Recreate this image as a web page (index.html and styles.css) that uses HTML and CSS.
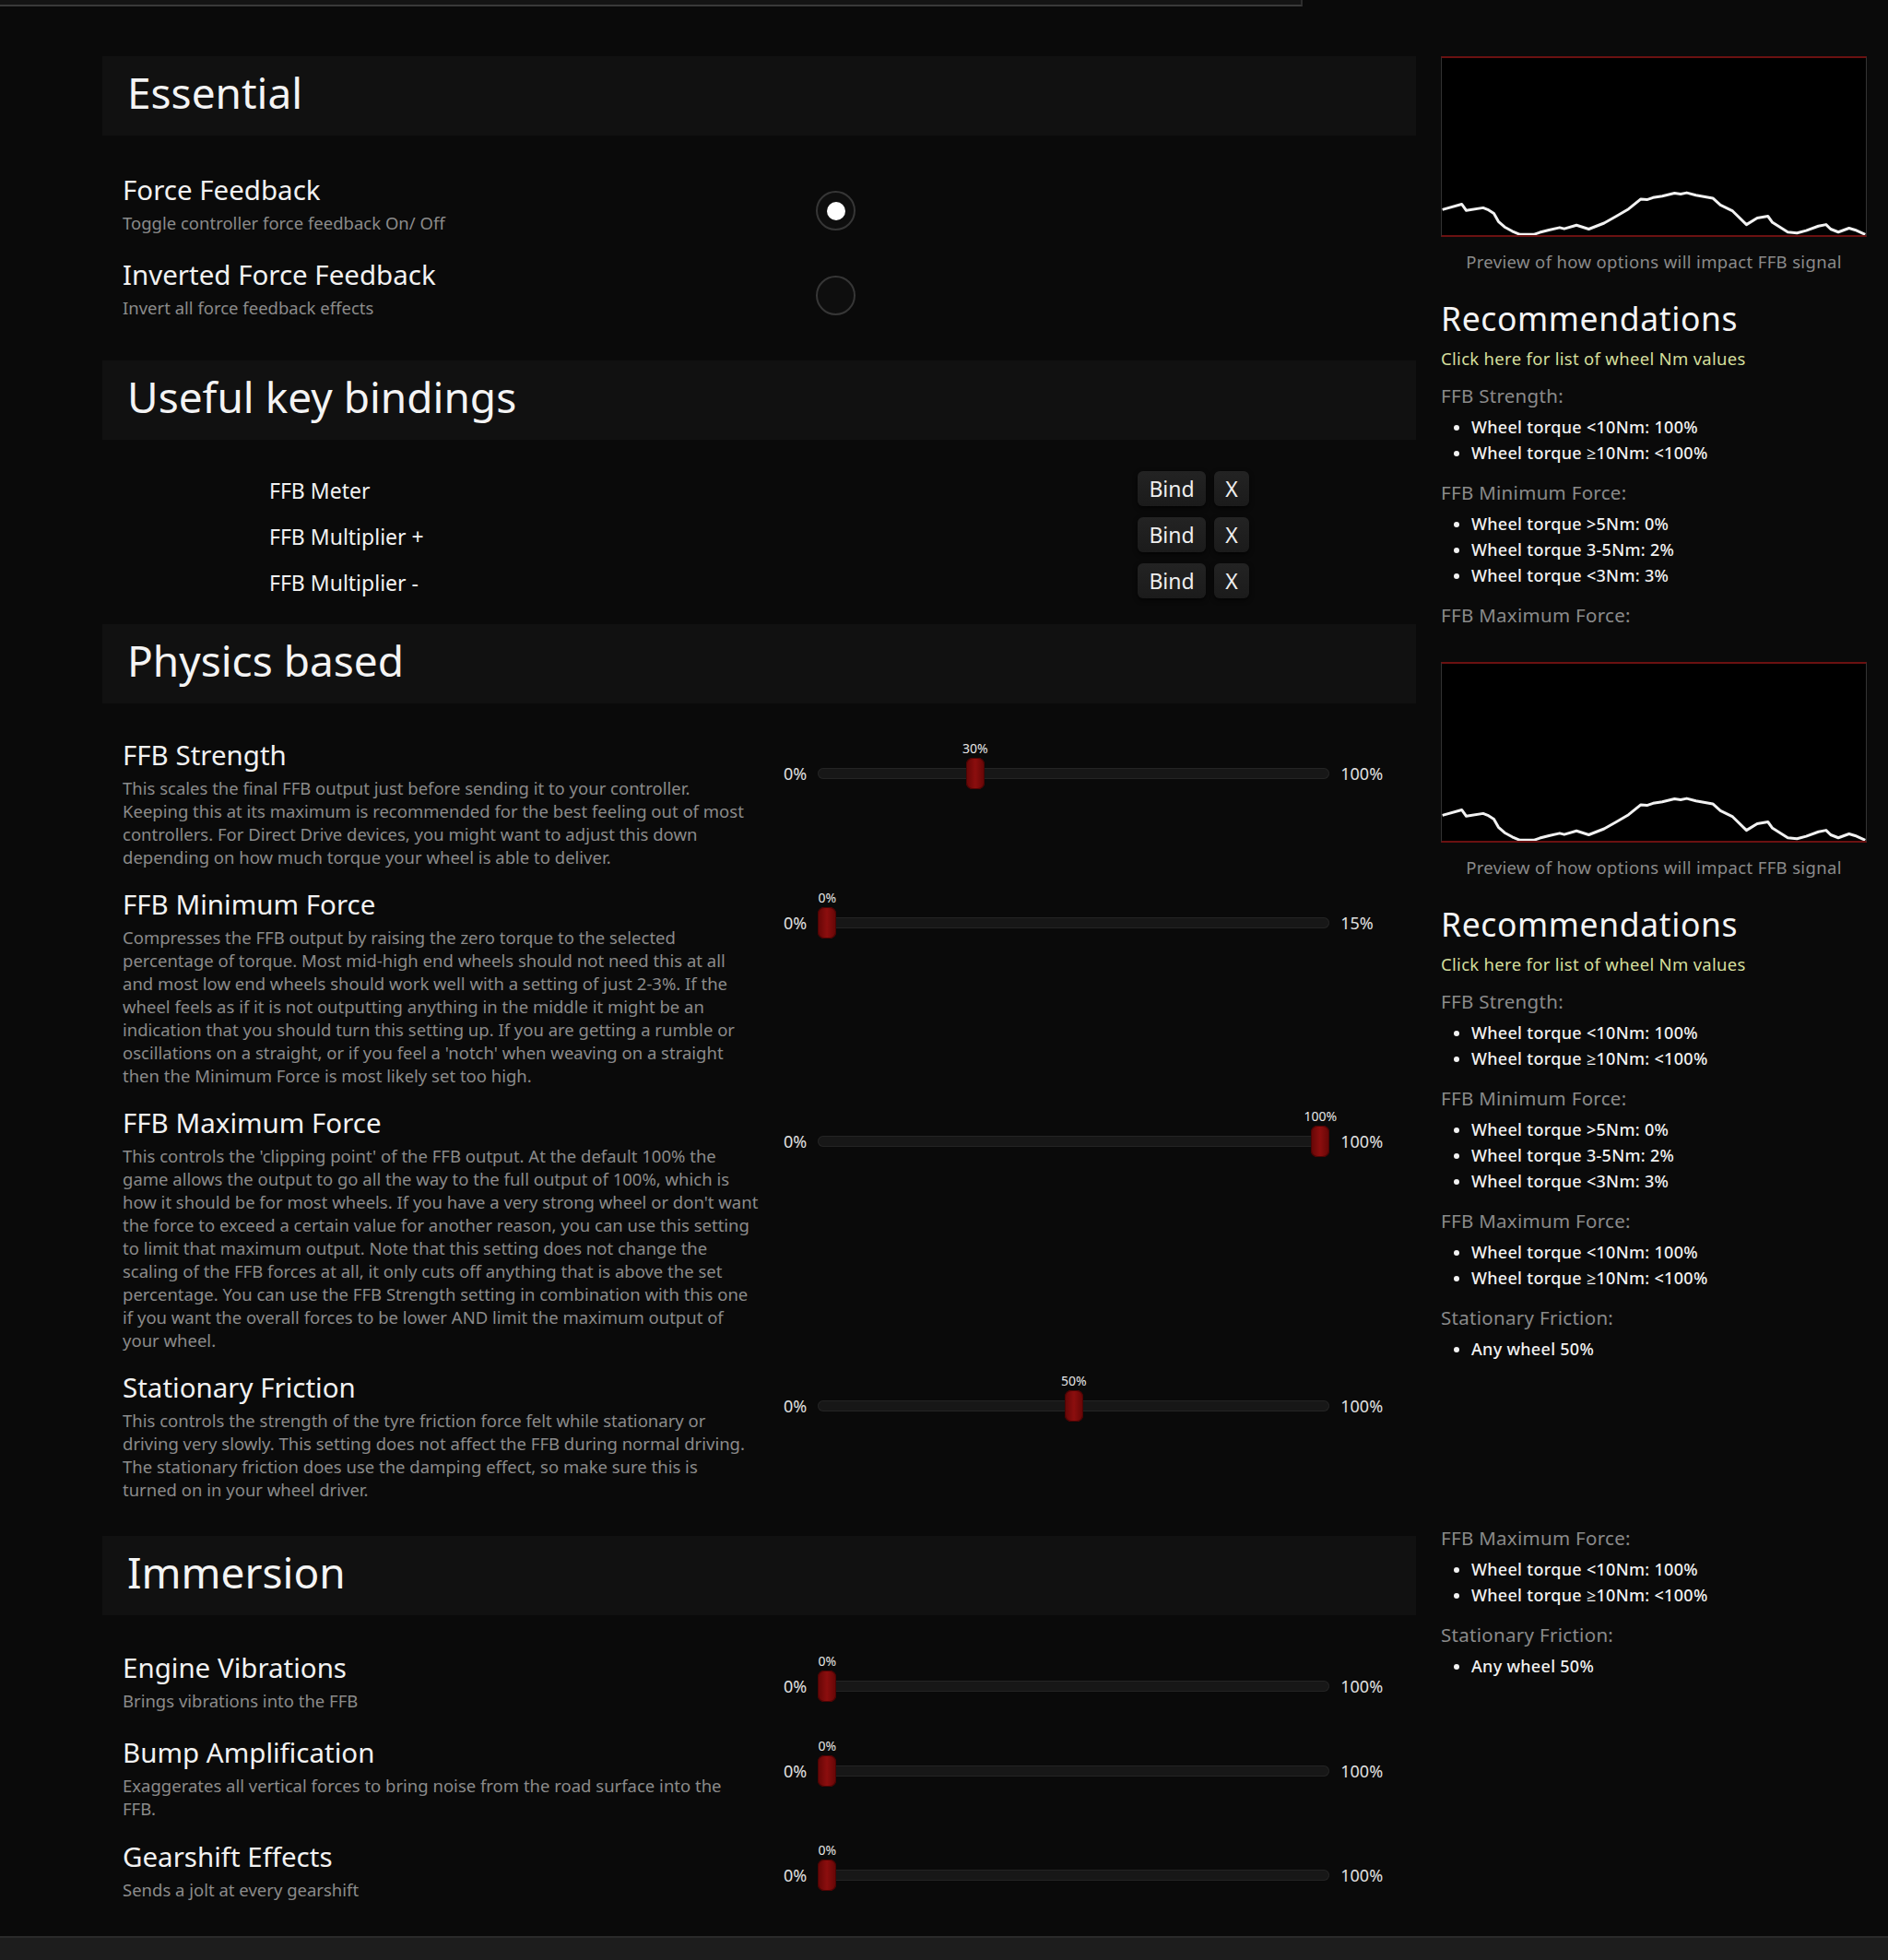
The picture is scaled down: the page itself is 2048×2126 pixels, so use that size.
FILE: index.html
```html
<!DOCTYPE html>
<html lang="en">
<head>
<meta charset="utf-8">
<title>FFB Settings</title>
<link rel="stylesheet" href="styles.css">
</head>
<body>
<div class="topbar"></div>
<div class="page">
  <main class="main">
    <section class="group">
      <h2 class="group-head">Essential</h2>
      <div class="group-body essential">
        <div class="setting">
          <div class="info">
            <div class="title">Force Feedback</div>
            <div class="desc">Toggle controller force feedback On/ Off</div>
          </div>
          <div class="control"><span class="radio"><span class="dot"></span></span></div>
        </div>
        <div class="setting">
          <div class="info">
            <div class="title">Inverted Force Feedback</div>
            <div class="desc">Invert all force feedback effects</div>
          </div>
          <div class="control"><span class="radio"></span></div>
        </div>
      </div>
    </section>

    <section class="group">
      <h2 class="group-head">Useful key bindings</h2>
      <div class="binds">
        <div class="bind-row"><span class="bind-label">FFB Meter</span><span class="btn btn-bind">Bind</span><span class="btn btn-x">X</span></div>
        <div class="bind-row"><span class="bind-label">FFB Multiplier +</span><span class="btn btn-bind">Bind</span><span class="btn btn-x">X</span></div>
        <div class="bind-row"><span class="bind-label">FFB Multiplier -</span><span class="btn btn-bind">Bind</span><span class="btn btn-x">X</span></div>
      </div>
    </section>

    <section class="group">
      <h2 class="group-head">Physics based</h2>
      <div class="group-body">
        <div class="setting">
          <div class="info">
            <div class="title">FFB Strength</div>
            <div class="desc">This scales the final FFB output just before sending it to your controller.<br>Keeping this at its maximum is recommended for the best feeling out of most<br>controllers. For Direct Drive devices, you might want to adjust this down<br>depending on how much torque your wheel is able to deliver.</div>
          </div>
          <div class="control">
            <div class="slider"><span class="lim">0%</span><div class="track"><div class="thumb" style="--p:0.30"><span class="thumb-val">30%</span></div></div><span class="lim">100%</span></div>
          </div>
        </div>
        <div class="setting">
          <div class="info">
            <div class="title">FFB Minimum Force</div>
            <div class="desc">Compresses the FFB output by raising the zero torque to the selected<br>percentage of torque. Most mid-high end wheels should not need this at all<br>and most low end wheels should work well with a setting of just 2-3%. If the<br>wheel feels as if it is not outputting anything in the middle it might be an<br>indication that you should turn this setting up. If you are getting a rumble or<br>oscillations on a straight, or if you feel a 'notch' when weaving on a straight<br>then the Minimum Force is most likely set too high.</div>
          </div>
          <div class="control">
            <div class="slider"><span class="lim">0%</span><div class="track"><div class="thumb" style="--p:0"><span class="thumb-val">0%</span></div></div><span class="lim">15%</span></div>
          </div>
        </div>
        <div class="setting">
          <div class="info">
            <div class="title">FFB Maximum Force</div>
            <div class="desc">This controls the 'clipping point' of the FFB output. At the default 100% the<br>game allows the output to go all the way to the full output of 100%, which is<br>how it should be for most wheels. If you have a very strong wheel or don't want<br>the force to exceed a certain value for another reason, you can use this setting<br>to limit that maximum output. Note that this setting does not change the<br>scaling of the FFB forces at all, it only cuts off anything that is above the set<br>percentage. You can use the FFB Strength setting in combination with this one<br>if you want the overall forces to be lower AND limit the maximum output of<br>your wheel.</div>
          </div>
          <div class="control">
            <div class="slider"><span class="lim">0%</span><div class="track"><div class="thumb" style="--p:1"><span class="thumb-val">100%</span></div></div><span class="lim">100%</span></div>
          </div>
        </div>
        <div class="setting">
          <div class="info">
            <div class="title">Stationary Friction</div>
            <div class="desc">This controls the strength of the tyre friction force felt while stationary or<br>driving very slowly. This setting does not affect the FFB during normal driving.<br>The stationary friction does use the damping effect, so make sure this is<br>turned on in your wheel driver.</div>
          </div>
          <div class="control">
            <div class="slider"><span class="lim">0%</span><div class="track"><div class="thumb" style="--p:0.5"><span class="thumb-val">50%</span></div></div><span class="lim">100%</span></div>
          </div>
        </div>
      </div>
    </section>

    <section class="group">
      <h2 class="group-head">Immersion</h2>
      <div class="group-body immersion">
        <div class="setting">
          <div class="info">
            <div class="title">Engine Vibrations</div>
            <div class="desc">Brings vibrations into the FFB</div>
          </div>
          <div class="control">
            <div class="slider"><span class="lim">0%</span><div class="track"><div class="thumb" style="--p:0"><span class="thumb-val">0%</span></div></div><span class="lim">100%</span></div>
          </div>
        </div>
        <div class="setting">
          <div class="info">
            <div class="title">Bump Amplification</div>
            <div class="desc">Exaggerates all vertical forces to bring noise from the road surface into the<br>FFB.</div>
          </div>
          <div class="control">
            <div class="slider"><span class="lim">0%</span><div class="track"><div class="thumb" style="--p:0"><span class="thumb-val">0%</span></div></div><span class="lim">100%</span></div>
          </div>
        </div>
        <div class="setting">
          <div class="info">
            <div class="title">Gearshift Effects</div>
            <div class="desc">Sends a jolt at every gearshift</div>
          </div>
          <div class="control">
            <div class="slider"><span class="lim">0%</span><div class="track"><div class="thumb" style="--p:0"><span class="thumb-val">0%</span></div></div><span class="lim">100%</span></div>
          </div>
        </div>
      </div>
    </section>
  </main>

  <aside class="side">
    <div class="panel">
      <div class="scope">
        <svg viewBox="0 0 1385 590" preserveAspectRatio="none"><polyline class="signal" points="2,505 65,487 80,508 135,499 150,505 170,518 185,545 205,563 230,577 255,588 300,588 320,581 350,573 385,565 400,569 440,557 480,570 530,550 570,527 610,503 650,470 670,472 690,465 720,460 760,450 780,453 800,449 830,457 885,467 910,490 950,510 995,555 1030,533 1065,527 1080,548 1130,580 1160,583 1190,575 1230,560 1255,555 1270,570 1295,580 1330,567 1350,573 1383,588"/></svg>
      </div>
      <p class="caption">Preview of how options will impact FFB signal</p>
      <h3 class="rec-title">Recommendations</h3>
      <p class="rec-link">Click here for list of wheel Nm values</p>
      <p class="rec-head">FFB Strength:</p>
      <ul class="rec-list"><li>Wheel torque &lt;10Nm: 100%</li><li>Wheel torque ≥10Nm: &lt;100%</li></ul>
      <p class="rec-head">FFB Minimum Force:</p>
      <ul class="rec-list"><li>Wheel torque &gt;5Nm: 0%</li><li>Wheel torque 3-5Nm: 2%</li><li>Wheel torque &lt;3Nm: 3%</li></ul>
      <p class="rec-head">FFB Maximum Force:</p>
    </div>

    <div class="panel panel-b">
      <div class="scope">
        <svg viewBox="0 0 1385 590" preserveAspectRatio="none"><polyline class="signal" points="2,505 65,487 80,508 135,499 150,505 170,518 185,545 205,563 230,577 255,588 300,588 320,581 350,573 385,565 400,569 440,557 480,570 530,550 570,527 610,503 650,470 670,472 690,465 720,460 760,450 780,453 800,449 830,457 885,467 910,490 950,510 995,555 1030,533 1065,527 1080,548 1130,580 1160,583 1190,575 1230,560 1255,555 1270,570 1295,580 1330,567 1350,573 1383,588"/></svg>
      </div>
      <p class="caption">Preview of how options will impact FFB signal</p>
      <h3 class="rec-title">Recommendations</h3>
      <p class="rec-link">Click here for list of wheel Nm values</p>
      <p class="rec-head">FFB Strength:</p>
      <ul class="rec-list"><li>Wheel torque &lt;10Nm: 100%</li><li>Wheel torque ≥10Nm: &lt;100%</li></ul>
      <p class="rec-head">FFB Minimum Force:</p>
      <ul class="rec-list"><li>Wheel torque &gt;5Nm: 0%</li><li>Wheel torque 3-5Nm: 2%</li><li>Wheel torque &lt;3Nm: 3%</li></ul>
      <p class="rec-head">FFB Maximum Force:</p>
      <ul class="rec-list"><li>Wheel torque &lt;10Nm: 100%</li><li>Wheel torque ≥10Nm: &lt;100%</li></ul>
      <p class="rec-head">Stationary Friction:</p>
      <ul class="rec-list"><li>Any wheel 50%</li></ul>
    </div>

    <div class="panel panel-c">
      <p class="rec-head">FFB Maximum Force:</p>
      <ul class="rec-list"><li>Wheel torque &lt;10Nm: 100%</li><li>Wheel torque ≥10Nm: &lt;100%</li></ul>
      <p class="rec-head">Stationary Friction:</p>
      <ul class="rec-list"><li>Any wheel 50%</li></ul>
    </div>
  </aside>
</div>
<footer class="bottombar"></footer>
</body>
</html>
```

FILE: styles.css
```css
* {
  box-sizing: border-box;
  margin: 0;
  padding: 0;
}

html,
body {
  background: #0a0a0a;
}

body {
  min-height: 100vh;
  display: flex;
  flex-direction: column;
  font-family: "Noto Sans", "Open Sans", sans-serif;
  color: #f1f1f1;
}

.topbar {
  width: 1413px;
  height: 7px;
  background: #141414;
  border-bottom: 2px solid #393939;
  border-right: 2px solid #2c2c2c;
}

.page {
  flex: 1;
  display: flex;
  gap: 27px;
  padding: 54px 0 0 111px;
}

.main {
  width: 1425px;
}

.group-head {
  height: 86px;
  line-height: 78px;
  padding-left: 27px;
  background: #111111;
  font-size: 46px;
  font-weight: 400;
  color: #f4f4f4;
}

.group-body {
  display: flex;
  flex-direction: column;
  gap: 19px;
  padding: 36px 0 38px 22px;
}

.group-body.essential {
  gap: 20px;
  padding: 39px 0 41px 22px;
}

.group-body.immersion {
  gap: 20px;
  padding: 37px 0 0 22px;
}

.setting {
  display: flex;
  min-height: 72px;
}

.info {
  width: 717px;
  flex: none;
}

.title {
  font-size: 29.5px;
  line-height: 40px;
  color: #f2f2f2;
}

.desc {
  margin-top: 3px;
  font-size: 18.5px;
  line-height: 25px;
  color: #8b8b8b;
  white-space: nowrap;
}

.control {
  flex: 1;
}

.radio {
  width: 43px;
  height: 43px;
  margin: 21px 0 0 35px;
  display: flex;
  align-items: center;
  justify-content: center;
  border-radius: 50%;
  border: 2px solid #363636;
  background: #0e0e0e;
}

.dot {
  width: 20px;
  height: 20px;
  border-radius: 50%;
  background: #ffffff;
}

/* key bindings */
.binds {
  display: flex;
  flex-direction: column;
  gap: 12px;
  padding: 34px 0 28px 181px;
}

.bind-row {
  display: flex;
  align-items: flex-start;
  height: 38px;
}

.bind-label {
  width: 942px;
  padding-top: 2px;
  font-size: 23px;
  line-height: 38px;
  color: #f2f2f2;
}

.btn {
  height: 38px;
  display: flex;
  align-items: center;
  justify-content: center;
  border-radius: 6px;
  background: linear-gradient(#232323, #1b1b1b);
  box-shadow: 0 2px 5px rgba(0, 0, 0, 0.7);
  font-size: 23px;
  color: #eeeeee;
}

.btn-bind {
  width: 74px;
}

.btn-x {
  width: 38px;
  margin-left: 9px;
}

/* sliders */
.slider {
  display: flex;
  align-items: center;
  gap: 12px;
  height: 34px;
  margin-top: 23px;
  font-size: 18px;
  color: #e0e0e0;
}

.track {
  position: relative;
  width: 555px;
  height: 12px;
  border-radius: 6px;
  background: #171717;
  box-shadow: inset 0 0 0 1px #242424;
}

.thumb {
  position: absolute;
  top: 50%;
  left: calc(var(--p) * (100% - 20px));
  width: 20px;
  height: 34px;
  margin-top: -17px;
  border-radius: 7px;
  background: linear-gradient(90deg, #640606, #8c0e0e 50%, #640606);
  box-shadow: inset 0 0 0 1px #4c0404;
}

.thumb-val {
  position: absolute;
  left: 50%;
  bottom: calc(100% + 3px);
  transform: translateX(-50%);
  font-size: 14px;
  line-height: 14px;
  color: #e6e6e6;
  white-space: nowrap;
}

/* right column */
.side {
  width: 462px;
  display: flex;
  flex-direction: column;
}

.panel-b {
  margin-top: 38px;
}

.panel-c {
  margin-top: 162px;
}

.scope {
  height: 196px;
  background: #000000;
  border-top: 2px solid #6b1111;
  border-bottom: 2px solid #6b1111;
  border-left: 1px solid #333333;
  border-right: 1px solid #333333;
}

.scope svg {
  display: block;
  width: 100%;
  height: 100%;
}

.signal {
  fill: none;
  stroke: #f2f2f2;
  stroke-width: 3;
  stroke-linejoin: round;
  vector-effect: non-scaling-stroke;
}

.caption {
  margin-top: 14px;
  text-align: center;
  font-size: 18.5px;
  line-height: 25px;
  letter-spacing: 0.35px;
  color: #8a8a8a;
}

.rec-title {
  margin-top: 27px;
  font-size: 35.5px;
  line-height: 44px;
  letter-spacing: 0.6px;
  font-weight: 400;
  color: #f4f4f4;
}

.rec-link {
  margin-top: 9px;
  font-size: 18.5px;
  line-height: 25px;
  letter-spacing: 0.3px;
  color: #d5df9c;
}

.rec-head {
  margin-top: 16px;
  font-size: 20.5px;
  line-height: 26px;
  letter-spacing: 0.3px;
  color: #8a8a8a;
}

.rec-link + .rec-head {
  margin-top: 15px;
}

.rec-list {
  margin-top: 7px;
  padding-left: 33px;
  font-size: 18px;
  line-height: 28px;
  font-weight: 500;
  letter-spacing: 0.3px;
  color: #f2f2f2;
}

.bottombar {
  height: 26px;
  background: #1d1d1d;
  border-top: 2px solid #2a2a2a;
}
```
